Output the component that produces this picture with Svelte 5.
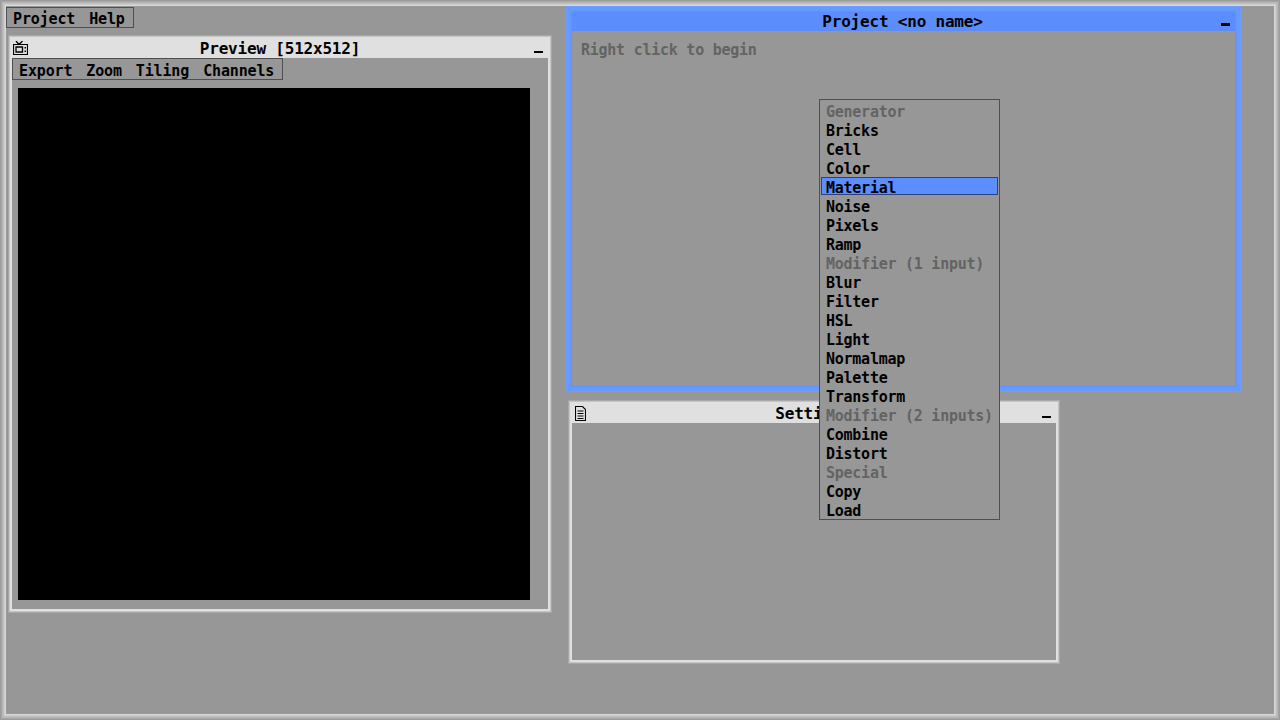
<script>
	const mainMenu = ['Project', 'Help'];
	const previewMenu = ['Export', 'Zoom', 'Tiling', 'Channels'];

	// header entries are greyed out, same order as in the popup
	const nodes = [
		{ label: 'Generator', header: true },
		{ label: 'Bricks' },
		{ label: 'Cell' },
		{ label: 'Color' },
		{ label: 'Material', active: true },
		{ label: 'Noise' },
		{ label: 'Pixels' },
		{ label: 'Ramp' },
		{ label: 'Modifier (1 input)', header: true },
		{ label: 'Blur' },
		{ label: 'Filter' },
		{ label: 'HSL' },
		{ label: 'Light' },
		{ label: 'Normalmap' },
		{ label: 'Palette' },
		{ label: 'Transform' },
		{ label: 'Modifier (2 inputs)', header: true },
		{ label: 'Combine' },
		{ label: 'Distort' },
		{ label: 'Special', header: true },
		{ label: 'Copy' },
		{ label: 'Load' }
	];
</script>

<main class="desktop">
	<nav class="menubar top">
		{#each mainMenu as item}
			<span>{item}</span>
		{/each}
	</nav>

	<section class="window preview">
		<header class="title">
			<svg class="icon" width="15" height="15" viewBox="0 0 15 15" aria-hidden="true">
				<path d="M3 0l3 3.5M9.5 0L6 3.5" fill="none" stroke="#000" stroke-width="1.3" />
				<path d="M.5 3.5h14v10H.5z" fill="none" stroke="#000" stroke-width="1.2" />
				<path d="M3 6h6.5v5H3z" fill="none" stroke="#000" stroke-width="1.3" />
				<path d="M11.5 6h1.5v1.5h-1.5zM11.5 9.5h1.5V11h-1.5z" fill="#000" />
			</svg>
			<h2>Preview [512x512]</h2>
			<span class="minimize"></span>
		</header>
		<nav class="menubar sub">
			{#each previewMenu as item}
				<span>{item}</span>
			{/each}
		</nav>
		<div class="canvas"></div>
	</section>

	<section class="window settings">
		<header class="title">
			<svg class="icon" width="11" height="15" viewBox="0 0 11 15" aria-hidden="true">
				<path d="M.5.5h7l3 3v11H.5z" fill="none" stroke="#000" stroke-width="1.1" />
				<path d="M2.5 5h6M2.5 7.5h6M2.5 10h6M2.5 12.5h6" stroke="#000" />
			</svg>
			<h2>Settings</h2>
			<span class="minimize"></span>
		</header>
	</section>

	<section class="window project">
		<header class="title">
			<span></span>
			<h2>Project &lt;no name&gt;</h2>
			<span class="minimize"></span>
		</header>
		<p class="hint">Right click to begin</p>
	</section>

	<ul class="popup">
		{#each nodes as node}
			<li class:header={node.header} class:active={node.active}>{node.label}</li>
		{/each}
	</ul>
</main>

<style>
	:global(body) {
		margin: 0;
		background: #979797;
		overflow: hidden;
	}
	.desktop {
		position: relative;
		box-sizing: border-box;
		height: 100vh;
		padding: 7px 6px;
		background: #979797;
		color: #000;
		font: bold 15px/19px 'DejaVu Sans Mono', 'Liberation Mono', monospace;
		letter-spacing: -0.25px;
		box-shadow:
			inset 0 0 0 1px #9c9c9c,
			inset 0 0 0 2px #a8a8a8,
			inset 0 0 0 3px #b4b4b4,
			inset 0 0 0 4px #c0c0c0,
			inset 0 0 0 5px #cccccc,
			inset 0 0 0 6px #d8d8d8;
	}
	.menubar {
		box-sizing: border-box;
		display: flex;
		gap: 14px;
		width: fit-content;
		height: 22px;
		padding: 3px 8px 0 6px;
		border: 1px solid #4f4f4f;
		letter-spacing: -0.15px;
	}
	.menubar.top {
		height: 21px;
		padding-top: 2px;
	}
	/* windows sit on a free canvas, size is the inner box, frame is drawn outward */
	.window {
		position: absolute;
		display: flex;
		flex-direction: column;
		box-shadow:
			0 0 0 2px #e0e0e0,
			0 0 0 3px #c4c4c4,
			0 0 0 4px #a8a8a8;
	}
	.preview {
		left: 12px;
		top: 39px;
		width: 536px;
		height: 570px;
	}
	.settings {
		left: 572px;
		top: 404px;
		width: 484px;
		height: 256px;
	}
	.project {
		left: 572px;
		top: 12px;
		width: 663px;
		height: 374px;
		box-shadow:
			0 0 0 1px #6092ff,
			0 0 0 3px #6698ff,
			0 0 0 5px #699aff,
			0 0 0 6px #6d9dff;
	}
	.title {
		display: grid;
		grid-template-columns: 1fr auto 1fr;
		align-items: center;
		flex: none;
		height: 19px;
		background: #e0e0e0;
	}
	.project .title {
		padding-right: 2px;
		background: #5c8dfc;
	}
	.settings .title {
		padding-right: 2px;
	}
	.title h2 {
		margin: 0;
		font: inherit;
		font-size: 16px;
		letter-spacing: -0.2px;
	}
	.icon {
		display: block;
		margin-left: 1px;
	}
	.settings .icon {
		margin-left: 3px;
	}
	.minimize {
		justify-self: end;
		width: 9px;
		height: 2px;
		margin: 7px 5px 0 0;
		background: #000;
	}
	.settings .minimize {
		margin-right: 3px;
	}
	.project .minimize {
		height: 3px;
		margin: 6px 3px 0 0;
	}
	.canvas {
		width: 512px;
		height: 512px;
		margin: 8px 0 0 6px;
		background: #000;
	}
	.hint {
		margin: 10px 0 0 9px;
		color: #636363;
	}
	.popup {
		position: absolute;
		left: 819px;
		top: 99px;
		box-sizing: border-box;
		width: 181px;
		height: 421px;
		margin: 0;
		padding: 3px 1px 0;
		list-style: none;
		background: #979797;
		border: 1px solid #4f4f4f;
	}
	.popup li {
		box-sizing: border-box;
		height: 19px;
		padding: 0 5px;
		white-space: nowrap;
	}
	.popup li.header {
		color: #636363;
	}
	.popup li.active {
		height: 18px;
		margin: -2px 0 3px;
		padding: 0 4px;
		line-height: 20px;
		background: #5c8eff;
		border: 1px solid #27408b;
	}
</style>
